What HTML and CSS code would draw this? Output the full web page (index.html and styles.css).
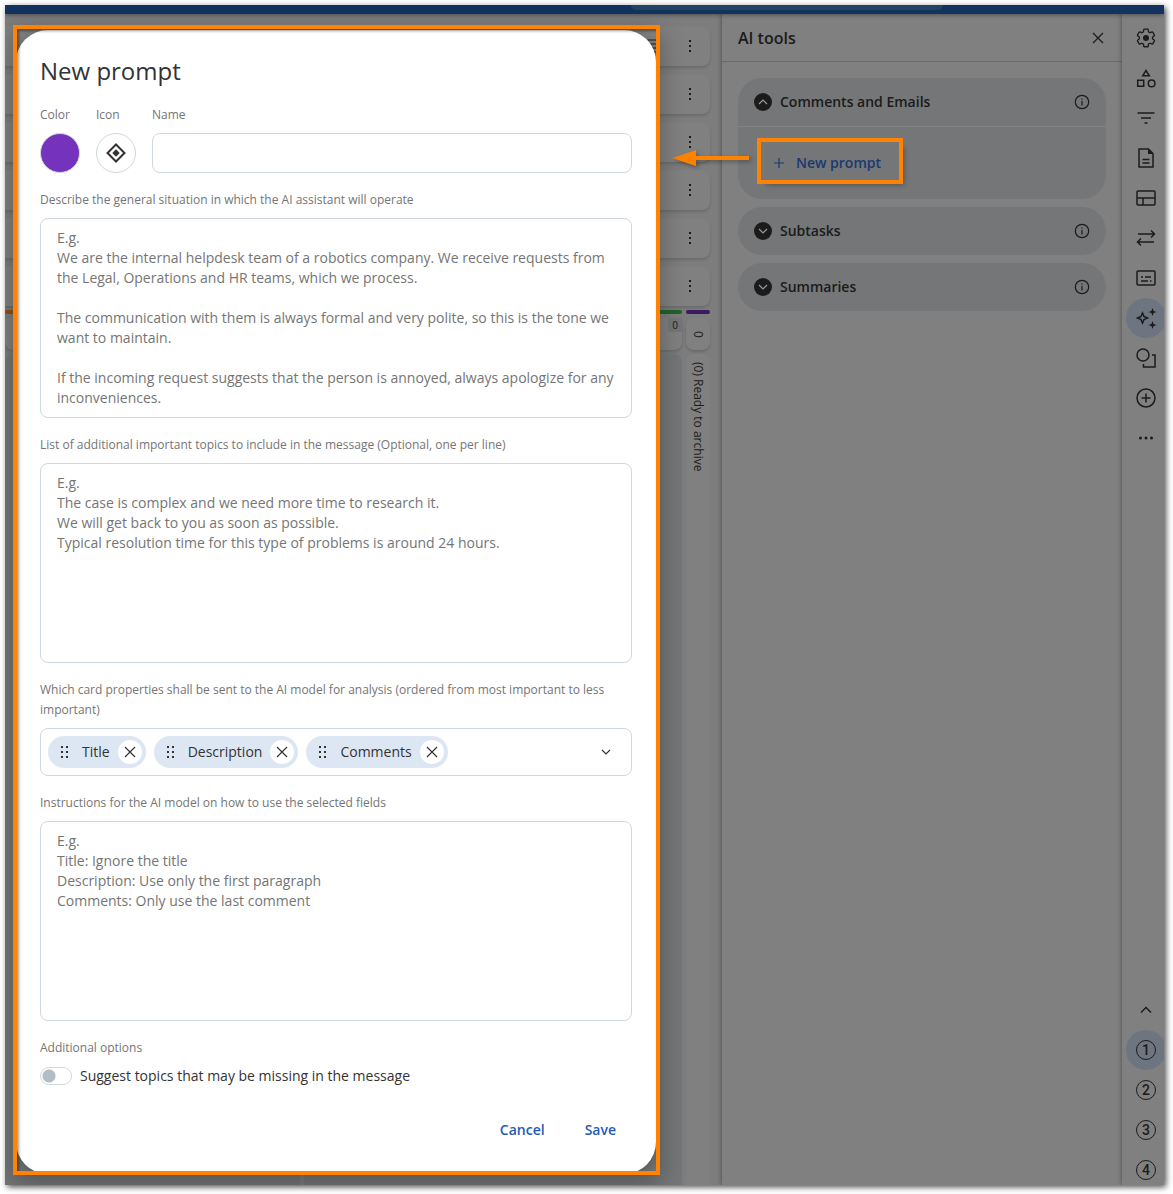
FILE: index.html
```
<!DOCTYPE html>
<html lang="en">
<head>
<meta charset="UTF-8">
<meta name="viewport" content="width=device-width, initial-scale=1.0">
<title>AI tools - New prompt</title>
<link rel="stylesheet" href="styles.css">
</head>
<body>

<!-- Shared icons -->
<svg class="sprite" aria-hidden="true">
    <symbol id="kebab" viewBox="0 0 16 16"><path d="M7 2h2v2H7zM7 7h2v2H7zM7 12h2v2H7z" fill="currentColor" stroke="none"/></symbol>
    <symbol id="close" viewBox="0 0 16 16"><path d="M3 3l10 10M13 3L3 13"/></symbol>
    <symbol id="grip" viewBox="0 0 16 16"><path d="M5 2h2v2H5zM10 2h2v2h-2zM5 7h2v2H5zM10 7h2v2h-2zM5 12h2v2H5zM10 12h2v2h-2z" fill="currentColor" stroke="none"/></symbol>
    <symbol id="down" viewBox="0 0 16 16"><path d="M4 6l4 4 4-4"/></symbol>
    <symbol id="up" viewBox="0 0 16 16"><path d="M4 10l4-4 4 4"/></symbol>
    <symbol id="info" viewBox="0 0 16 16"><circle cx="8" cy="8" r="6.7"/><path d="M8 7v4.5M8 4.500v1.200"/></symbol>
</svg>

<div class="app">
    <header class="topbar"><div class="topbar-search"></div></header>

    <div class="main">
        <!-- Board behind the dialog -->
        <div class="board">
            <div class="board-row"><svg class="icon" viewBox="0 0 16 16"><path d="M2 2h12M5 6h9M5 10h9M8 14h4"/></svg><svg class="icon"><use href="#kebab"/></svg></div>
            <div class="board-row"><svg class="icon"><use href="#kebab"/></svg></div>
            <div class="board-row"><svg class="icon"><use href="#kebab"/></svg></div>
            <div class="board-row"><svg class="icon"><use href="#kebab"/></svg></div>
            <div class="board-row"><svg class="icon"><use href="#kebab"/></svg></div>
            <div class="board-row"><svg class="icon"><use href="#kebab"/></svg></div>
            <div class="columns">
                <div class="bar bar-orange"></div>
                <div class="bar bar-green"></div>
                <div class="bar bar-purple"></div>
                <div class="column-head"></div>
                <div class="column-head"><span class="count">0</span></div>
                <div class="column-head vertical">0</div>
                <div class="lane"></div>
                <div class="lane"></div>
                <div class="lane lane-archive vertical">(0) Ready to archive</div>
            </div>
        </div>

        <!-- AI tools panel -->
        <aside class="panel">
            <div class="panel-header">
                <h2>AI tools</h2>
                <button class="icon-button" type="button" aria-label="Close"><svg class="icon"><use href="#close"/></svg></button>
            </div>
            <div class="panel-body">
                <section class="group">
                    <div class="group-header">
                        <button class="fold" type="button" aria-label="Collapse"><svg class="icon"><use href="#up"/></svg></button>
                        <h3>Comments and Emails</h3>
                        <svg class="icon"><use href="#info"/></svg>
                    </div>
                    <div class="group-body">
                        <div class="callout-target">
                            <button class="new-prompt" type="button">
                                <svg class="icon" viewBox="0 0 16 16"><path d="M8 3v10M3 8h10"/></svg>
                                New prompt
                            </button>
                            <svg class="callout-arrow" viewBox="0 0 78 20"><path d="M24 8h54v4H24zM1 10L25 2v16z"/></svg>
                        </div>
                    </div>
                </section>
                <section class="group">
                    <div class="group-header">
                        <button class="fold" type="button" aria-label="Expand"><svg class="icon"><use href="#down"/></svg></button>
                        <h3>Subtasks</h3>
                        <svg class="icon"><use href="#info"/></svg>
                    </div>
                </section>
                <section class="group">
                    <div class="group-header">
                        <button class="fold" type="button" aria-label="Expand"><svg class="icon"><use href="#down"/></svg></button>
                        <h3>Summaries</h3>
                        <svg class="icon"><use href="#info"/></svg>
                    </div>
                </section>
            </div>
        </aside>

        <!-- Right icon rail -->
        <nav class="rail">
            <div class="rail-group">
                <button class="rail-item" type="button" aria-label="Settings"><svg viewBox="0 0 24 24"><g transform="translate(1.4 1.4) scale(.88)"><path d="M19.43 12.98c.04-.32.07-.64.07-.98 0-.34-.03-.66-.07-.98l2.11-1.65c.19-.15.24-.42.12-.64l-2-3.46c-.09-.16-.26-.25-.44-.25-.06 0-.12.01-.17.03l-2.49 1c-.52-.4-1.08-.73-1.69-.98l-.38-2.65C14.46 2.18 14.25 2 14 2h-4c-.25 0-.46.18-.49.42l-.38 2.65c-.61.25-1.17.59-1.69.98l-2.49-1c-.06-.02-.12-.03-.18-.03-.17 0-.34.09-.43.25l-2 3.46c-.13.22-.07.49.12.64l2.11 1.65c-.04.32-.07.65-.07.98 0 .33.03.66.07.98l-2.11 1.65c-.19.15-.24.42-.12.64l2 3.46c.09.16.26.25.44.25.06 0 .12-.01.17-.03l2.49-1c.52.4 1.08.73 1.69.98l.38 2.65c.03.24.24.42.49.42h4c.25 0 .46-.18.49-.42l.38-2.65c.61-.25 1.17-.59 1.69-.98l2.49 1c.06.02.12.03.18.03.17 0 .34-.09.43-.25l2-3.46c.12-.22.07-.49-.12-.64l-2.11-1.65z"/></g><circle class="solid" cx="12" cy="12" r="3"/></svg></button>
                <button class="rail-item" type="button" aria-label="Types"><svg viewBox="0 0 24 24"><path d="M12 4.500l3.300 5.300H8.700zM3.700 14.300h6v6h-6z"/><circle cx="17.600" cy="17.400" r="3.300"/></svg></button>
                <button class="rail-item" type="button" aria-label="Filter"><svg viewBox="0 0 24 24"><path d="M3.500 7h17M7 12h10M10.500 17h3"/></svg></button>
                <button class="rail-item" type="button" aria-label="Document"><svg viewBox="0 0 24 24"><path d="M5 3h9.500l4.500 4.500V21H5zM8.500 13.500h7M8.500 17h7"/><path class="solid" d="M14 3l5 5h-5z"/></svg></button>
                <button class="rail-item" type="button" aria-label="Layout"><svg viewBox="0 0 24 24"><rect x="3" y="5" width="18" height="14" rx="1"/><path d="M3 12h18M9 12v7"/></svg></button>
                <button class="rail-item" type="button" aria-label="Transfer"><svg viewBox="0 0 24 24"><path d="M4 8h16M17 4.500L20.500 8 17 11.500M20 16H4M7 12.500L3.500 16 7 19.500"/></svg></button>
                <button class="rail-item" type="button" aria-label="Card template"><svg viewBox="0 0 24 24"><rect x="3" y="5" width="18" height="14" rx="1"/><path d="M7 11h2M11 11h6M7 15h7M16 15h1.500"/></svg></button>
                <button class="rail-item active" type="button" aria-label="AI tools"><svg viewBox="0 0 24 24"><path d="M8.500 7l1.500 3.500L13.500 12 10 13.500 8.500 17 7 13.500 3.500 12 7 10.500z"/><path class="solid" d="M18.500 2l1.100 2.900 2.900 1.100-2.900 1.100-1.100 2.900-1.100-2.900L14.500 6l2.900-1.100zM18.500 15l1.100 2.900 2.900 1.100-2.900 1.100-1.100 2.900-1.100-2.900-2.900-1.100 2.900-1.100z"/></svg></button>
                <button class="rail-item" type="button" aria-label="Relations"><svg viewBox="0 0 24 24"><circle cx="9" cy="9" r="6"/><path d="M18 9h3v12H9.500v-3"/></svg></button>
                <button class="rail-item" type="button" aria-label="Add"><svg viewBox="0 0 24 24"><circle cx="12" cy="12" r="9"/><path d="M12 7.500v9M7.500 12h9"/></svg></button>
                <button class="rail-item" type="button" aria-label="More"><svg viewBox="0 0 24 24"><g class="solid"><circle cx="6.500" cy="12" r="1.500"/><circle cx="12" cy="12" r="1.500"/><circle cx="17.500" cy="12" r="1.500"/></g></svg></button>
            </div>
            <div class="rail-group rail-bottom">
                <button class="rail-item" type="button" aria-label="Up"><svg viewBox="0 0 24 24"><path d="M7 14.500l5-5 5 5"/></svg></button>
                <button class="rail-item active" type="button"><span class="number">1</span></button>
                <button class="rail-item" type="button"><span class="number">2</span></button>
                <button class="rail-item" type="button"><span class="number">3</span></button>
                <button class="rail-item" type="button"><span class="number">4</span></button>
            </div>
        </nav>
    </div>

    <!-- New prompt dialog -->
    <div class="callout">
        <form class="modal" role="dialog" aria-labelledby="modal-title">
            <h1 id="modal-title">New prompt</h1>

            <div class="field-row">
                <div class="field">
                    <label for="color">Color</label>
                    <button class="round color" id="color" type="button"></button>
                </div>
                <div class="field">
                    <label for="icon">Icon</label>
                    <button class="round" id="icon" type="button"><svg viewBox="0 0 24 24"><path d="M12 3.500l8.500 8.500-8.500 8.500L3.500 12z"/><path class="solid" d="M12 8.300l3.700 3.700-3.700 3.700L8.300 12z"/></svg></button>
                </div>
                <div class="field grow">
                    <label for="name">Name</label>
                    <input class="text-input" id="name" type="text">
                </div>
            </div>

            <div class="field">
                <label for="situation">Describe the general situation in which the AI assistant will operate</label>
                <textarea id="situation" placeholder="E.g.
We are the internal helpdesk team of a robotics company. We receive requests from the Legal, Operations and HR teams, which we process.

The communication with them is always formal and very polite, so this is the tone we want to maintain.

If the incoming request suggests that the person is annoyed, always apologize for any inconveniences."></textarea>
            </div>

            <div class="field">
                <label for="topics">List of additional important topics to include in the message (Optional, one per line)</label>
                <textarea id="topics" placeholder="E.g.
The case is complex and we need more time to research it.
We will get back to you as soon as possible.
Typical resolution time for this type of problems is around 24 hours."></textarea>
            </div>

            <div class="field">
                <label for="properties">Which card properties shall be sent to the AI model for analysis (ordered from most important to less important)</label>
                <div class="chips">
                    <span class="chip"><svg class="icon"><use href="#grip"/></svg>Title<button type="button" aria-label="Remove Title"><svg class="icon"><use href="#close"/></svg></button></span>
                    <span class="chip"><svg class="icon"><use href="#grip"/></svg>Description<button type="button" aria-label="Remove Description"><svg class="icon"><use href="#close"/></svg></button></span>
                    <span class="chip"><svg class="icon"><use href="#grip"/></svg>Comments<button type="button" aria-label="Remove Comments"><svg class="icon"><use href="#close"/></svg></button></span>
                    <button class="icon-button chips-open" id="properties" type="button"><svg class="icon"><use href="#down"/></svg></button>
                </div>
            </div>

            <div class="field">
                <label for="instructions">Instructions for the AI model on how to use the selected fields</label>
                <textarea id="instructions" placeholder="E.g.
Title: Ignore the title
Description: Use only the first paragraph
Comments: Only use the last comment"></textarea>
            </div>

            <div class="field">
                <span class="caption">Additional options</span>
                <label class="switch" for="suggest"><input id="suggest" type="checkbox">Suggest topics that may be missing in the message</label>
            </div>

            <div class="actions">
                <button type="button">Cancel</button>
                <button type="submit">Save</button>
            </div>
        </form>
    </div>
</div>

</body>
</html>
```
FILE: styles.css
```
* { box-sizing: border-box; }
body {
    margin: 0;
    padding: 5px 9px 9px 5px;
    min-height: 100vh;
    display: flex;
    background: #fff;
    color: #1b1b1b;
    font: 14px/20px "Open Sans", "Noto Sans", sans-serif;
}
h1, h2, h3 { margin: 0; }
button, input, textarea { font: inherit; color: inherit; }
button { padding: 0; border: 0; background: none; cursor: pointer; }
svg { fill: none; stroke: currentColor; stroke-width: 1.5; flex-shrink: 0; }
.solid { fill: currentColor; stroke: none; }
.sprite { position: absolute; width: 0; height: 0; }
.icon { width: 16px; height: 16px; stroke-width: 1.2; display: block; }
.icon-button { display: flex; padding: 4px; }

.app {
    position: relative;
    flex: 1;
    min-width: 0;
    display: flex;
    flex-direction: column;
    overflow: hidden;
    box-shadow: 2px 2px 6px rgba(0, 0, 0, .7);
}
.topbar {
    position: relative;
    height: 9px;
    padding-left: 54%;
    background: #13325f;
    box-shadow: 0 1px 4px rgba(0, 0, 0, .4);
    z-index: 1;
}
.topbar-search { width: 312px; height: 5px; background: #254365; border-radius: 0 0 16px 16px; }
.main { flex: 1; display: flex; }

/* board */
.board {
    flex: 1;
    min-width: 0;
    display: flex;
    flex-direction: column;
    gap: 8px;
    padding: 12px 12px 0 0;
    background: #7d7d7d;
}
.board-row {
    height: 40px;
    display: flex;
    align-items: center;
    justify-content: flex-end;
    gap: 22px;
    padding-right: 12px;
    background: #808080;
    border-radius: 0 8px 8px 0;
    box-shadow: 0 2px 3px rgba(0, 0, 0, .15);
}
.columns {
    flex: 1;
    display: grid;
    grid-template-columns: 295px 1fr 24px;
    grid-template-rows: 4px 32px 1fr;
    gap: 4px;
    margin-top: -4px;
}
.bar { border-radius: 2px; }
.bar-orange { background: #96500f; }
.bar-green { background: #22622a; }
.bar-purple { background: #3b1a63; }
.column-head {
    display: flex;
    justify-content: flex-end;
    background: #808080;
    border-radius: 0 0 8px 8px;
    box-shadow: 0 2px 3px rgba(0, 0, 0, .15);
}
.count {
    width: 14px;
    height: 14px;
    background: #747678;
    border-radius: 0 0 0 4px;
    font-size: 10px;
    line-height: 14px;
    text-align: center;
}
.vertical {
    writing-mode: vertical-rl;
    font-size: 12px;
    line-height: 24px;
}
.column-head.vertical { justify-content: center; border-radius: 8px; }
.lane { background: #747678; border-radius: 8px 8px 0 0; }
.lane-archive { padding-top: 8px; background: #808080; }

/* AI tools panel */
.panel {
    position: relative;
    width: 400px;
    background: #808080;
    box-shadow: -1px 0 4px rgba(0, 0, 0, .3);
}
.panel-header {
    height: 48px;
    display: flex;
    align-items: center;
    justify-content: space-between;
    padding: 0 12px 0 16px;
    border-bottom: 1px solid #6a6a6a;
}
.panel-header h2 { font-size: 16px; font-weight: 600; }
.panel-body { display: flex; flex-direction: column; gap: 8px; padding: 16px; }
.group { background: #747678; border-radius: 24px; }
.group-header { height: 48px; display: flex; align-items: center; gap: 8px; padding: 0 16px; }
.group-header h3 { flex: 1; font-size: 14px; font-weight: 600; }
.fold {
    width: 18px;
    height: 18px;
    padding: 1px;
    border-radius: 50%;
    background: #1b1b1b;
    color: #999;
}
.group-body {
    display: flex;
    padding: 15px 23px 19px;
    border-top: 1px solid #808284;
}
.callout-target {
    position: relative;
    outline: 4px solid #ff8200;
    box-shadow: 5px 5px 5px rgba(0, 0, 0, .3);
}
.new-prompt {
    width: 138px;
    height: 38px;
    display: flex;
    align-items: center;
    gap: 9px;
    padding: 4px 0 0 10px;
    color: #173a70;
    font-weight: 600;
}
.callout-arrow {
    position: absolute;
    right: calc(100% + 12px);
    top: 6px;
    width: 78px;
    height: 20px;
    fill: #ff8200;
    stroke: none;
    filter: drop-shadow(2px 2px 2px rgba(0, 0, 0, .3));
}

/* right rail */
.rail {
    position: relative;
    width: 42px;
    display: flex;
    flex-direction: column;
    justify-content: space-between;
    padding: 4px 0 0 4px;
    background: #808080;
    box-shadow: -1px 0 4px rgba(0, 0, 0, .3);
    overflow: hidden;
}
.rail-item {
    width: 40px;
    height: 40px;
    display: flex;
    align-items: center;
    justify-content: center;
    border-radius: 50%;
}
.rail-item svg { width: 24px; height: 24px; }
.rail-item.active { background: #6d7580; }
.rail-bottom { margin-bottom: -5px; }
.number {
    width: 20px;
    height: 20px;
    border: 1px solid #1b1b1b;
    border-radius: 50%;
    font: 500 14px/18px "Roboto", sans-serif;
}

/* dialog with its highlight frame */
.callout {
    position: absolute;
    left: 8px;
    top: 20px;
    width: 647px;
    max-width: calc(100% - 16px);
    border: 4px solid #ff8200;
    overflow: hidden;
    box-shadow: 0 8px 24px rgba(0, 0, 0, .3);
    z-index: 2;
}
.callout::after {
    content: "";
    position: absolute;
    inset: 0;
    box-shadow: inset 2px 2px 3px rgba(0, 0, 0, .4);
    pointer-events: none;
}
.modal {
    display: flex;
    flex-direction: column;
    gap: 17px;
    margin: 1px 0 -3px -1px;
    padding: 24px;
    background: #fff;
    border-radius: 32px;
    box-shadow: 0 4px 16px rgba(0, 0, 0, .3);
    color: #333;
}
.modal h1 { font-size: 24px; line-height: 34px; font-weight: 400; }
.field-row { display: flex; gap: 16px; }
.field { display: flex; flex-direction: column; gap: 8px; }
.grow { flex: 1; }
.field label, .caption { color: #757575; font-size: 12px; }
.text-input, textarea, .chips {
    width: 100%;
    border: 1px solid #cfd8dc;
    border-radius: 8px;
    background: #fff;
}
.text-input { height: 40px; padding: 0 16px; }
textarea { display: block; height: 200px; padding: 9px 16px; resize: none; }
textarea::placeholder { color: #757575; }
.round {
    width: 40px;
    height: 40px;
    display: flex;
    align-items: center;
    justify-content: center;
    border: 1px solid #cfd8dc;
    border-radius: 50%;
}
.round svg { width: 24px; height: 24px; stroke-width: 2; }
.color { background: #7432bd; }
.chips { height: 48px; display: flex; align-items: center; gap: 8px; padding: 0 13px 0 7px; }
.chip {
    height: 32px;
    display: flex;
    align-items: center;
    gap: 8px;
    padding: 0 4px 0 8px;
    border-radius: 16px;
    background: #dde7f3;
}
.chip > .icon { margin-right: 2px; }
.chip button {
    width: 24px;
    height: 24px;
    padding: 4px;
    border-radius: 50%;
    background: #fff;
}
.chips-open { margin-left: auto; }
.field .switch {
    display: flex;
    align-items: center;
    gap: 8px;
    color: #333;
    font-size: 14px;
}
.switch input {
    appearance: none;
    width: 32px;
    height: 18px;
    margin: 0;
    border: 1px solid #cfd8dc;
    border-radius: 9px;
    background: radial-gradient(circle at 8px 8px, #b0bec5 6px, transparent 7px);
}
.actions { display: flex; justify-content: flex-end; gap: 8px; margin-top: 7px; }
.actions button { height: 40px; padding: 0 16px; color: #1f5ab9; font-weight: 600; }
```
